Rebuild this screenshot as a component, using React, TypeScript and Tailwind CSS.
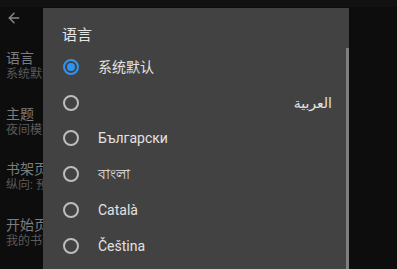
import { ArrowLeft } from "lucide-react";

const settings = [
  { title: "语言", sub: "系统默认" },
  { title: "主题", sub: "夜间模式" },
  { title: "书架页面", sub: "纵向: 预览" },
  { title: "开始页面", sub: "我的书架" },
];

const languages = [
  { label: "系统默认", rtl: false },
  { label: "العربية", rtl: true },
  { label: "Български", rtl: false },
  { label: "বাংলা", rtl: false },
  { label: "Català", rtl: false },
  { label: "Čeština", rtl: false },
];

export default function App() {
  return (
    <div
      className="relative h-[269px] w-[397px] overflow-hidden bg-[#0d0d0d]"
      style={{ fontFamily: 'Roboto, "Noto Sans CJK SC", "DejaVu Sans", sans-serif' }}
    >
      <div className="h-[7px] bg-[#111111]" />
      <div className="flex h-[22px] items-center pl-[6px] text-[#8a8a8a]">
        <ArrowLeft className="h-[16px] w-[16px]" strokeWidth={2.2} />
      </div>

      <div className="flex flex-col pl-[6px] pt-[22px]">
        {settings.map((s) => (
          <div key={s.title} className="flex h-[55.7px] flex-col">
            <p className="text-[14px] leading-[15px] text-[#7c7c7c]">{s.title}</p>
            <p className="mt-[1px] text-[12px] leading-[14px] text-[#5a5a5a]">{s.sub}</p>
          </div>
        ))}
      </div>

      <div className="absolute left-[43px] top-[8px] h-[280px] w-[306px] bg-[#424242]">
        <div className="absolute right-0 top-[40px] h-[240px] w-[3px] bg-[#7e7e7e]" />
        <h2 className="pl-[19px] pt-[17px] text-[15px] leading-[20px] text-[#e6e6e6]">语言</h2>
        <div className="mt-[4px] flex flex-col">
          {languages.map((l, i) => (
            <div key={l.label} className="flex h-[35.8px] items-center pl-[20px] pr-[17px]">
              {i === 0 ? (
                <span className="flex h-[16px] w-[16px] shrink-0 items-center justify-center rounded-full border-2 border-[#2f95f0]">
                  <span className="h-[8px] w-[8px] rounded-full bg-[#2f95f0]" />
                </span>
              ) : (
                <span className="h-[16px] w-[16px] shrink-0 rounded-full border-2 border-[#bdbdbd]" />
              )}
              <span
                className="ml-[19px] flex-1 text-[14px] leading-[16px] text-[#e2e2e2]"
                dir={l.rtl ? "rtl" : undefined}
              >
                {l.label}
              </span>
            </div>
          ))}
        </div>
      </div>
    </div>
  );
}
